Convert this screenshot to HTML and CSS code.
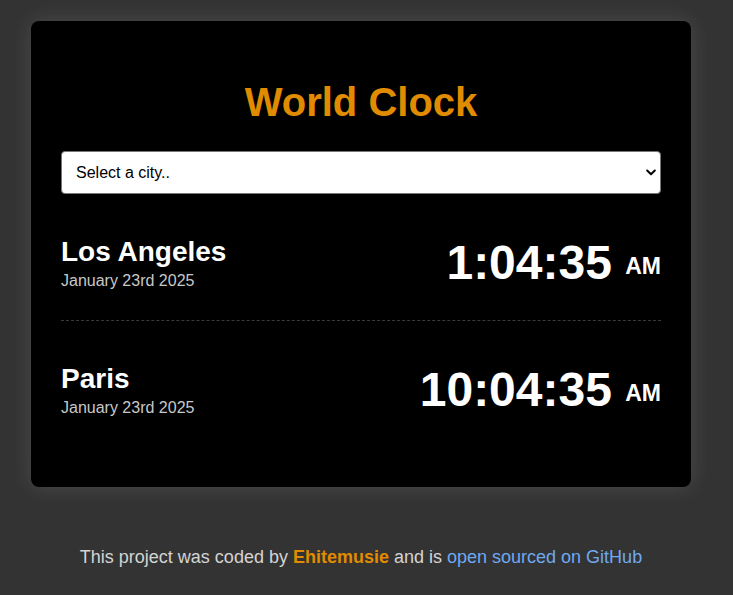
FILE: index.html
```html
<!DOCTYPE html>
<html lang="en">
<head>
<meta charset="utf-8">
<title>World Clock</title>
<link rel="stylesheet" href="styles.css">
</head>
<body>
<div class="page">
  <main class="card">
    <h1 class="title">World Clock</h1>
    <div class="select-wrap">
      <select class="city-select">
        <option>Select a city..</option>
        <option>Los Angeles</option>
        <option>Paris</option>
        <option>Tokyo</option>
      </select>
      <svg class="chevron" width="10" height="7" viewBox="0 0 10 7"><path d="M1.2 1.5 L5 5.2 L8.8 1.5" fill="none" stroke="#000" stroke-width="2" stroke-linecap="round" stroke-linejoin="round"/></svg>
    </div>
    <div class="cities">
      <div class="city">
        <div class="city-info">
          <h2 class="city-name">Los Angeles</h2>
          <div class="city-date">January 23rd 2025</div>
        </div>
        <div class="city-time">1:04:35 <small class="ampm">AM</small></div>
      </div>
      <div class="city">
        <div class="city-info">
          <h2 class="city-name">Paris</h2>
          <div class="city-date">January 23rd 2025</div>
        </div>
        <div class="city-time">10:04:35 <small class="ampm">AM</small></div>
      </div>
    </div>
  </main>
  <footer class="footer">
    This project was coded by <a class="author" href="#">Ehitemusie</a> and is <a class="repo" href="#">open sourced on GitHub</a>
  </footer>
</div>
</body>
</html>
```

FILE: styles.css
```css
html, body {
  margin: 0;
  padding: 0;
  background: #333333;
}
body {
  font-family: "Liberation Sans", Arial, Helvetica, sans-serif;
  color: #fff;
}
.page {
  width: 722px;
  padding-top: 21px;
  display: flex;
  flex-direction: column;
  align-items: center;
}
.card {
  width: 660px;
  box-sizing: border-box;
  background: #000;
  border-radius: 8px;
  padding: 30px 30px 40px;
  box-shadow: 0 0 22px rgba(255, 255, 255, 0.12);
}
.title {
  margin: 28px 0 26px;
  font-size: 40px;
  line-height: 46px;
  font-weight: bold;
  text-align: center;
  color: #e08b00;
}
.select-wrap {
  position: relative;
}
.city-select {
  display: block;
  width: 100%;
  height: 43px;
  box-sizing: border-box;
  appearance: none;
  -webkit-appearance: none;
  background: #fff;
  border: 1px solid #767676;
  border-radius: 4px;
  padding: 0 14px;
  font-family: "Liberation Sans", Arial, sans-serif;
  font-size: 16px;
  color: #000;
}
.chevron {
  position: absolute;
  right: 5px;
  top: 18px;
  pointer-events: none;
}
.city {
  display: flex;
  justify-content: space-between;
  align-items: center;
  padding: 41px 0 30px;
}
.city + .city {
  border-top: 1px dashed #3a3a3a;
}
.city-name {
  margin: 0;
  font-size: 28px;
  line-height: 32px;
  font-weight: bold;
}
.city-date {
  margin-top: 4px;
  font-size: 16px;
  line-height: 18px;
  color: #c8c8c8;
}
.city-time {
  font-size: 48px;
  line-height: 55px;
  font-weight: bold;
  color: #fff;
}
.ampm {
  font-size: 23px;
  line-height: 1;
  vertical-align: middle;
}
.footer {
  margin-top: 60px;
  font-size: 18px;
  line-height: 21px;
  color: #d4d4d4;
  text-align: center;
}
.author {
  color: #e08b00;
  font-weight: bold;
  text-decoration: none;
}
.repo {
  color: #6fa9f0;
  text-decoration: none;
}
```
